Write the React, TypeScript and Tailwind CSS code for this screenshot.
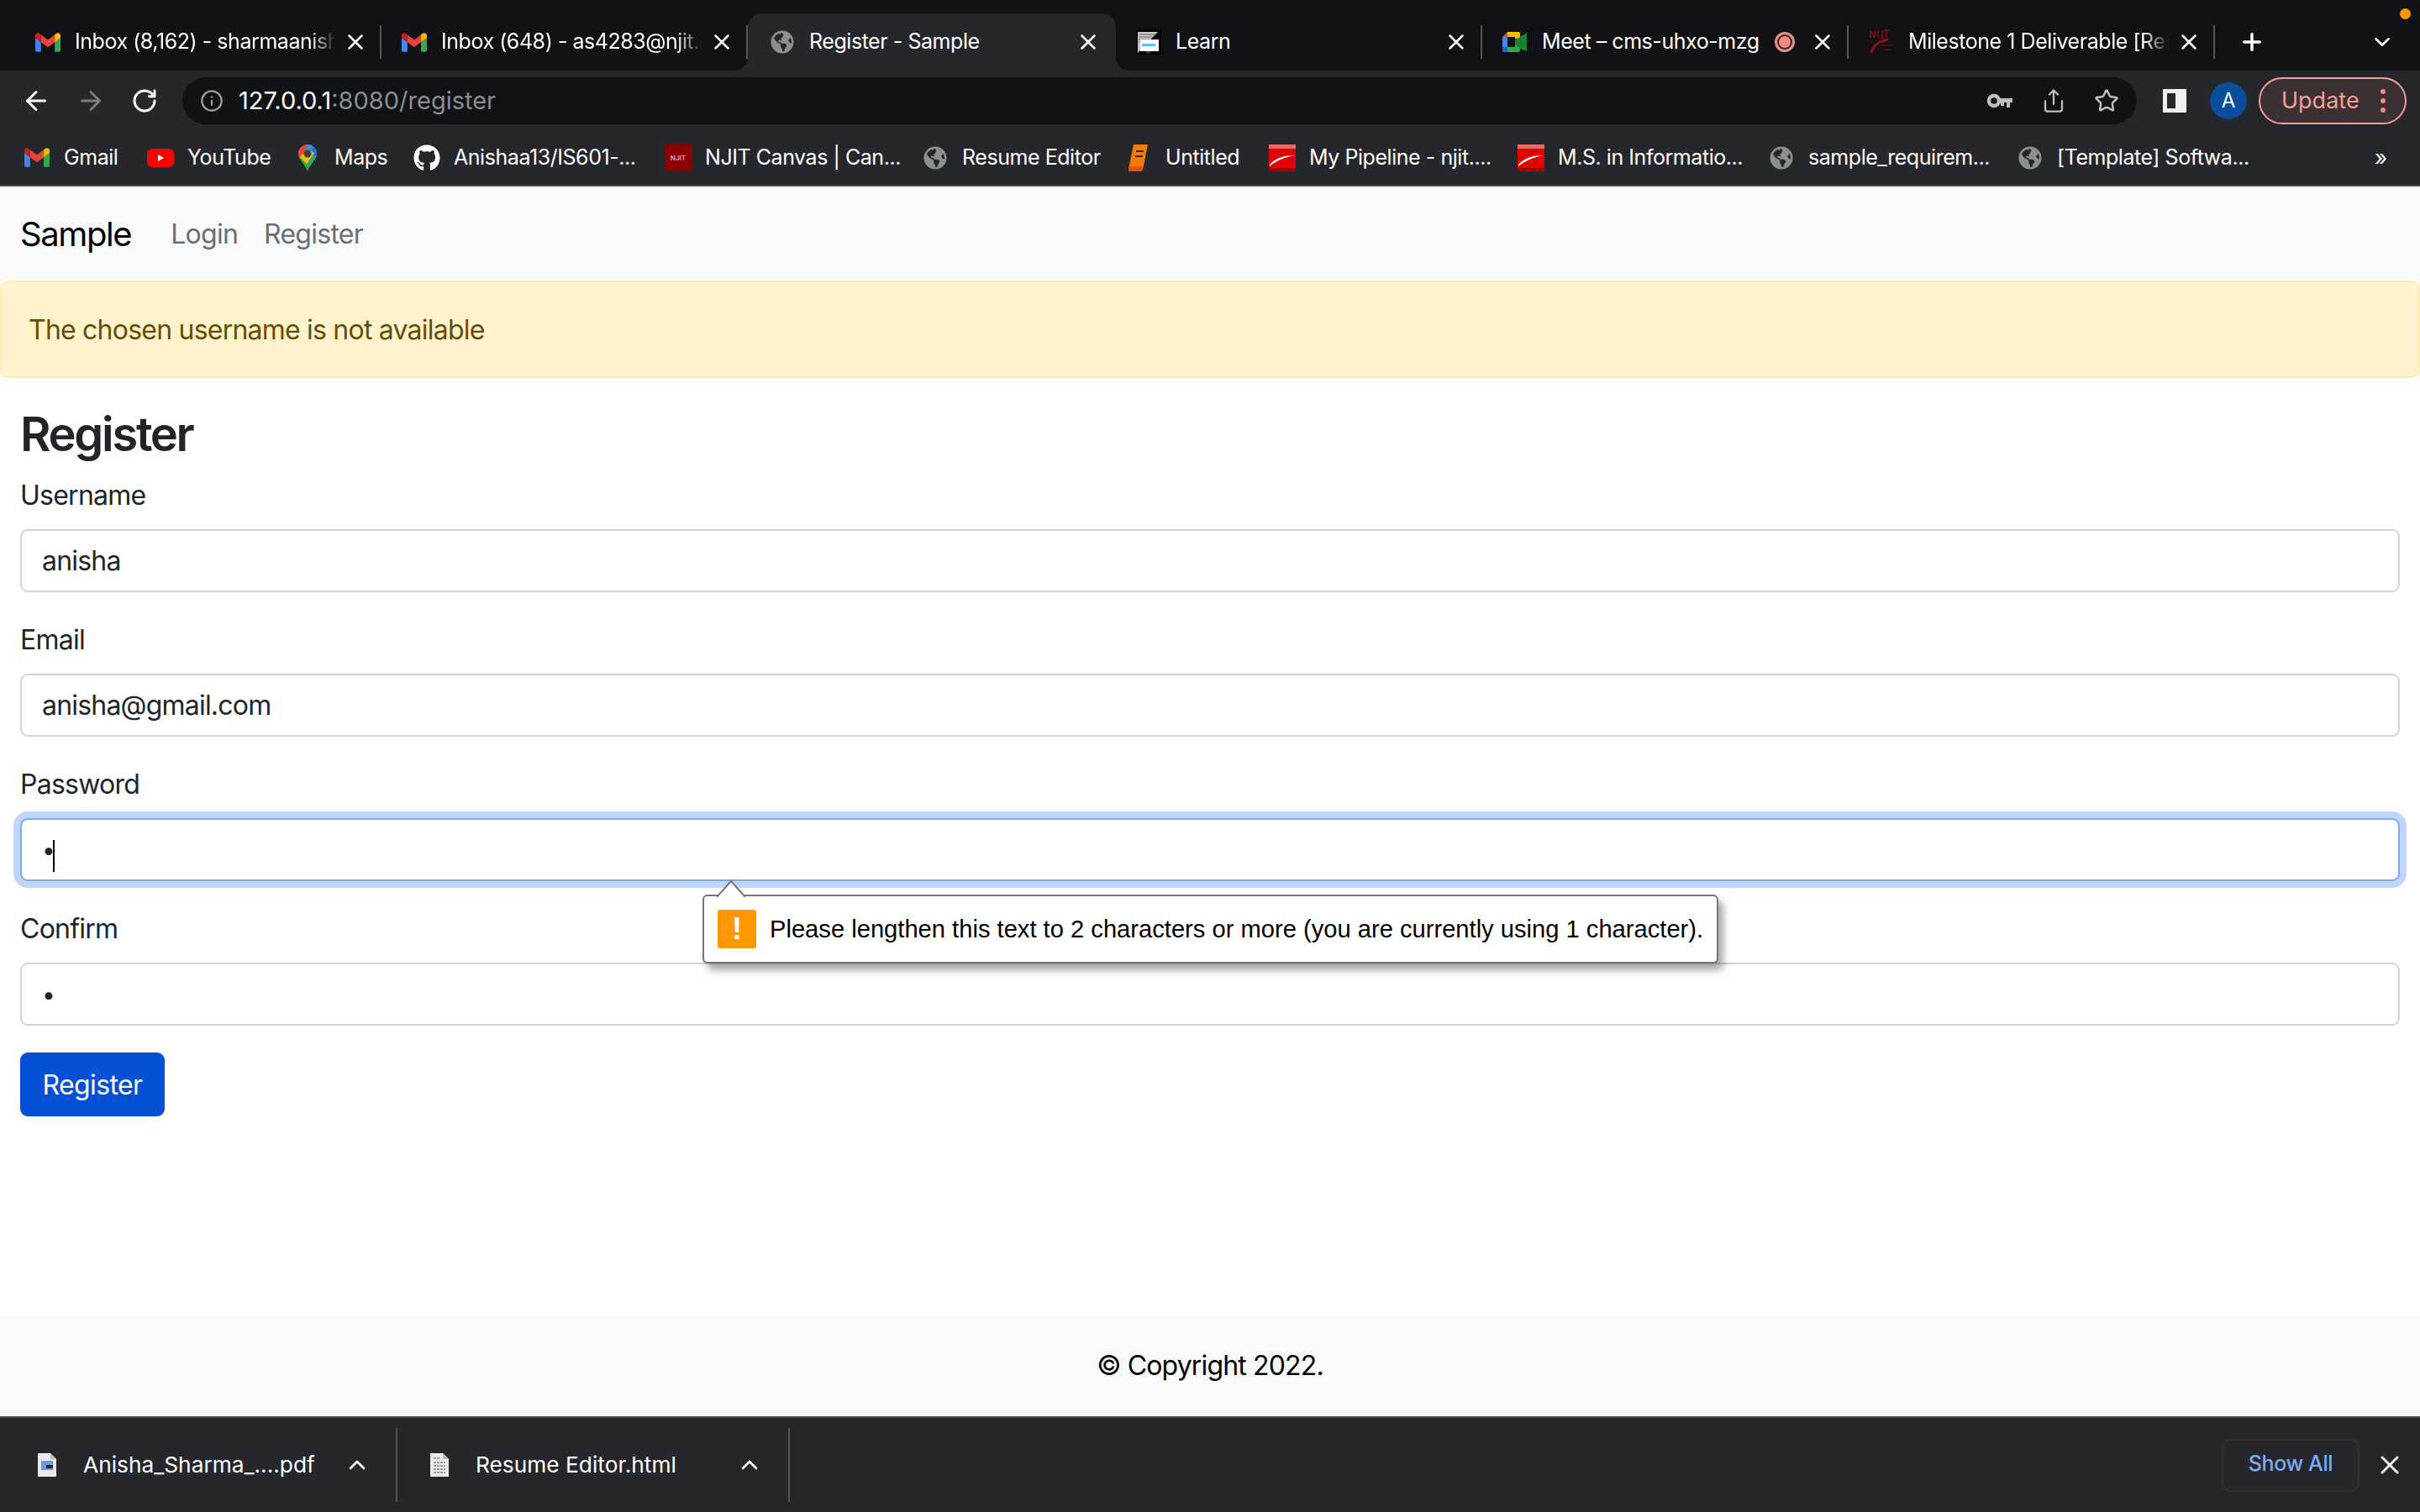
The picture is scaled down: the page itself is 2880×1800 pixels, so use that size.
import { ArrowLeft, ArrowRight, ChevronDown, ChevronUp, Info, Plus, RotateCw, Share, Star, X } from "lucide-react";
import type { ReactNode } from "react";
import { FaGithub, FaGlobeAmericas } from "react-icons/fa";

function GmailIcon({ className }: { className?: string }) {
  return (
    <svg viewBox="0 0 24 18" className={className}>
      <path fill="#4285f4" d="M1.6 18H5.4V8.7L0 4.6v11.8C0 17.3.7 18 1.6 18" />
      <path fill="#34a853" d="M18.5 18h3.9c.9 0 1.6-.7 1.6-1.6V4.6l-5.5 4.1" />
      <path fill="#fbbc04" d="M18.5 1.6v7.1L24 4.6V2.4c0-2-2.3-3.2-3.9-2" />
      <path fill="#ea4335" d="M5.4 8.7V1.6L12 6.5l6.5-4.9v7.1L12 13.6" />
      <path fill="#c5221f" d="M0 2.4v2.2l5.4 4.1V1.6L3.9.5C2.3-.7 0 .4 0 2.4" />
    </svg>
  );
}

function Globe() {
  return <FaGlobeAmericas className="h-[28px] w-[28px] text-[#8b8e92]" />;
}

function LearnIcon() {
  return (
    <svg viewBox="0 0 30 30" className="h-[30px] w-[30px]">
      <rect width="30" height="30" fill="#000" />
      <path fill="#c9c9c9" d="M2 3h24L2 28z" />
      <path stroke="#666" strokeWidth="1" d="M3 6h20M3 9h17M3 12h14M3 15h11" />
      <rect x="5" y="12" width="22" height="14" fill="#fff" />
      <rect x="7" y="17" width="16" height="3" fill="#5cc3f2" />
      <rect x="12" y="26" width="5" height="3" fill="#333" />
    </svg>
  );
}

function MeetIcon() {
  return (
    <svg viewBox="0 0 30 24" className="h-[24px] w-[30px]">
      <path fill="#ea4335" d="M6 0 0 6h6z" />
      <path fill="#fbbc04" d="M6 0h13a2 2 0 0 1 2 2v6h-6V6H6z" />
      <path fill="#4285f4" d="M0 6h6v12H0z" />
      <path fill="#1967d2" d="M0 18h6v6H2a2 2 0 0 1-2-2z" />
      <path fill="#34a853" d="M6 18h9v-3l6-4v11a2 2 0 0 1-2 2H6z" />
      <path fill="#188038" d="M15 9v6l6 5 8 3V1l-8 5z" />
    </svg>
  );
}

function NjitLogo() {
  return (
    <svg viewBox="0 0 30 32" className="h-[32px] w-[30px]">
      <path stroke="#7d1016" strokeWidth="1.6" fill="none" d="M2 2v9M7 2v9M2 2l5 9M11 2v9M16 2v9M14 11h4M21 2v9M18 2h7" />
      <path stroke="#8e1118" strokeWidth="3" fill="none" d="M3 29c2-9 10-14 20-16" />
      <path stroke="#5e1014" strokeWidth="1.5" d="M15 20h13M18 25h8" />
    </svg>
  );
}

function MapsIcon() {
  return (
    <svg viewBox="0 0 22 32" className="h-[32px] w-[22px]">
      <clipPath id="pin">
        <path d="M11 0C5 0 0 5 0 11c0 7 8 12 11 21 3-9 11-14 11-21C22 5 17 0 11 0z" />
      </clipPath>
      <g clipPath="url(#pin)">
        <rect width="22" height="32" fill="#34a853" />
        <path fill="#4285f4" d="M8 0h14v13l-6 2z" />
        <path fill="#1a73e8" d="M16 4h6v9h-6z" />
        <path fill="#ea4335" d="M0 0h11L3 16H0z" />
        <path fill="#fbbc04" d="M2 15 11 6l8 4-9 13z" />
      </g>
      <circle cx="11" cy="11" r="4.5" fill="#3c3f43" />
    </svg>
  );
}

function YoutubeIcon() {
  return (
    <svg viewBox="0 0 32 22" className="h-[22px] w-[32px]">
      <rect width="32" height="22" rx="6" fill="#f00" />
      <path fill="#fff" d="m13 7 7 4-7 4z" />
    </svg>
  );
}

function NjitSquare() {
  return (
    <div className="flex h-[32px] w-[32px] items-center justify-center bg-[#8b0000] text-[8px] font-bold text-[#d9a0a0]">
      NJIT
    </div>
  );
}

function BookIcon() {
  return (
    <svg viewBox="0 0 26 32" className="h-[32px] w-[26px]">
      <path fill="#f57c00" d="M7 0h17l-6 30H1z" />
      <path fill="#e65100" d="M1 26h17l-1 6H1z" />
      <path stroke="#3a2410" strokeWidth="2" d="M10 8h9M9 14h9" />
    </svg>
  );
}

function FlagIcon() {
  return (
    <svg viewBox="0 0 32 32" className="h-[32px] w-[32px]">
      <rect width="32" height="32" fill="#e30000" />
      <rect width="32" height="5" fill="#ec6a6a" />
      <rect y="28" width="32" height="4" fill="#a80000" />
      <path fill="#fff" d="M1 24C8 16 18 13 31 13c-11 2-20 5-30 13z" />
    </svg>
  );
}

function DocIcon({ pdf }: { pdf?: boolean }) {
  return (
    <svg viewBox="0 0 22 28" className="h-[28px] w-[22px]">
      <path fill="#e8eaed" d="M1 0h14l7 7v20a1 1 0 0 1-1 1H1a1 1 0 0 1-1-1V1a1 1 0 0 1 1-1z" />
      <path fill="#b8babd" d="M15 0v7h7z" />
      {pdf ? (
        <>
          <rect x="4" y="9" width="14" height="11" fill="#6a9be0" />
          <rect x="10" y="14" width="8" height="4" fill="#222" />
        </>
      ) : (
        <path stroke="#9a9c9f" strokeWidth="2" strokeDasharray="3 1" d="M4 6h8M4 11h14M4 15h14M4 19h14M4 23h14" />
      )}
    </svg>
  );
}

const tabs: { icon: ReactNode; title: string; fade?: boolean; extra?: ReactNode }[] = [
  { icon: <GmailIcon className="h-[23px] w-[30px]" />, title: "Inbox (8,162) - sharmaanisha", fade: true },
  { icon: <GmailIcon className="h-[23px] w-[30px]" />, title: "Inbox (648) - as4283@njit.edu", fade: true },
  { icon: <Globe />, title: "Register - Sample" },
  { icon: <LearnIcon />, title: "Learn" },
  {
    icon: <MeetIcon />,
    title: "Meet – cms-uhxo-mzg",
    extra: (
      <div className="mr-[10px] flex h-[24px] w-[24px] items-center justify-center rounded-full bg-[#f28b82]">
        <div className="h-[18px] w-[18px] rounded-full border-2 border-[#26272c] bg-[#f28b82]" />
      </div>
    ),
  },
  { icon: <NjitLogo />, title: "Milestone 1 Deliverable [Responsive", fade: true },
];

const bookmarks: { icon: ReactNode; label: string; boxClass: string }[] = [
  { icon: <GmailIcon className="h-[23px] w-[30px]" />, label: "Gmail", boxClass: "w-[147px]" },
  { icon: <YoutubeIcon />, label: "YouTube", boxClass: "w-[175px]" },
  { icon: <MapsIcon />, label: "Maps", boxClass: "w-[142px]" },
  { icon: <FaGithub className="h-[32px] w-[32px] text-white" />, label: "Anishaa13/IS601-...", boxClass: "w-[299px]" },
  { icon: <NjitSquare />, label: "NJIT Canvas | Can...", boxClass: "w-[306px]" },
  { icon: <Globe />, label: "Resume Editor", boxClass: "w-[242px]" },
  { icon: <BookIcon />, label: "Untitled", boxClass: "w-[171px]" },
  { icon: <FlagIcon />, label: "My Pipeline - njit....", boxClass: "w-[296px]" },
  { icon: <FlagIcon />, label: "M.S. in Informatio...", boxClass: "w-[298px]" },
  { icon: <Globe />, label: "sample_requirem...", boxClass: "w-[296px]" },
  { icon: <Globe />, label: "[Template] Softwa...", boxClass: "w-[320px]" },
];

function Tab({ icon, title, fade, extra, active }: (typeof tabs)[number] & { active?: boolean }) {
  return (
    <div
      className={
        active
          ? "flex h-[68px] w-[438px] shrink-0 items-center rounded-t-[16px] bg-[#26272c] pr-[18px] pl-[26px]"
          : "flex h-[68px] w-[436px] shrink-0 items-center pl-[24px]"
      }
    >
      <div className="flex w-[30px] shrink-0 justify-center">{icon}</div>
      <div
        className={
          fade
            ? "ml-[17px] flex-1 overflow-hidden text-[25px] tracking-[-0.45px] whitespace-nowrap text-white [mask-image:linear-gradient(to_right,black_90%,transparent)]"
            : "ml-[17px] flex-1 overflow-hidden text-[25px] tracking-[-0.45px] whitespace-nowrap text-white"
        }
      >
        {title}
      </div>
      {extra}
      <X size={30} strokeWidth={2} className="ml-[8px] shrink-0 text-white" />
      {!active && <div className="ml-[14px] h-[40px] w-[2px] shrink-0 bg-[#55565b]" />}
    </div>
  );
}

function Field({ label, value, type = "text", focused }: { label: string; value: string; type?: string; focused?: boolean }) {
  const size = type === "password" ? "text-[28px]" : "text-[32px] tracking-[-0.8px]";
  return (
    <div className="relative mb-[32px]">
      <label className="mb-[17px] block h-[48px] text-[32px] leading-[50px] tracking-[-0.75px] text-[#212529]">{label}</label>
      <input
        readOnly
        type={type}
        value={value}
        className={
          focused
            ? `block h-[75px] w-full rounded-[9px] border-2 border-[#7aaaf5] bg-white px-[24px] ${size} text-[#212529] shadow-[0_0_0_8px_#c0d5fd] outline-none`
            : `block h-[75px] w-full rounded-[9px] border-2 border-[#ced4da] bg-white px-[24px] ${size} text-[#212529] outline-none`
        }
      />
    </div>
  );
}

function Download({ pdf, name, width }: { pdf?: boolean; name: string; width: string }) {
  return (
    <div className={`flex h-[88px] items-center border-r-2 border-[#55565b] ${width}`}>
      <div className="flex w-[22px] shrink-0">
        <DocIcon pdf={pdf} />
      </div>
      <span className="ml-[32px] flex-1 text-[26.3px] whitespace-nowrap text-white">{name}</span>
      <ChevronUp size={32} strokeWidth={2} className="mr-[30px] text-white" />
    </div>
  );
}

export default function App() {
  return (
    <div className="relative flex h-[1800px] w-[2880px] flex-col overflow-hidden bg-white font-['Inter',sans-serif]">
      <div className="absolute top-[10px] right-[11px] h-[13px] w-[13px] rounded-full bg-[#ff9500]" />

      <div className="flex h-[84px] shrink-0 items-end bg-[#111216] pl-[18px]">
        <Tab {...tabs[0]} />
        <div className="bg-[#26272c]">
          <div className="rounded-br-[16px] bg-[#111216]">
            <Tab {...tabs[1]} />
          </div>
        </div>
        <Tab {...tabs[2]} active />
        <div className="bg-[#26272c]">
          <div className="rounded-bl-[16px] bg-[#111216]">
            <Tab {...tabs[3]} />
          </div>
        </div>
        <Tab {...tabs[4]} />
        <Tab {...tabs[5]} />
        <div className="flex h-[68px] flex-1 items-center pl-[28px]">
          <Plus size={32} strokeWidth={2.6} className="text-white" />
          <ChevronDown size={30} strokeWidth={2} className="ml-[124px] text-white" />
        </div>
      </div>

      <div className="flex h-[64px] shrink-0 bg-[#26272c] pt-[8px]">
        <div className="flex h-[56px] w-[217px] items-center pl-[25px]">
          <ArrowLeft size={36} strokeWidth={2} className="text-white" />
          <ArrowRight size={36} strokeWidth={2} className="ml-[29px] text-[#7c7d80]" />
          <RotateCw size={32} strokeWidth={2.2} className="ml-[30px] text-white" />
        </div>
        <div className="flex h-[56px] w-[2326px] items-center rounded-full bg-[#111216] pl-[21px]">
          <Info size={28} strokeWidth={2} className="text-[#9a9ca0]" />
          <div className="ml-[18px] flex-1 text-[29px]">
            <span className="text-white">127.0.0.1</span>
            <span className="text-[#8b8d91]">:8080/register</span>
          </div>
          <svg viewBox="0 0 30 18" className="h-[18px] w-[30px]">
            <circle cx="8" cy="9" r="6" fill="none" stroke="#bdbfc2" strokeWidth="4.5" />
            <path fill="#bdbfc2" d="M13 6h17v5h-3v6h-4v-6h-3v4h-4v-4h-3z" />
          </svg>
          <Share size={30} strokeWidth={1.8} className="ml-[34px] text-[#bdbfc2]" />
          <Star size={30} strokeWidth={2} className="mr-[21px] ml-[33px] text-[#bdbfc2]" />
        </div>
        <div className="flex h-[56px] flex-1 items-center pl-[31px]">
          <div className="h-[28px] w-[28px] border-[5px] border-r-[13px] border-[#eef0f2]" />
          <div className="ml-[28px] flex h-[44px] w-[44px] items-center justify-center rounded-full bg-[#0b4f9c] text-[24px] text-white">A</div>
          <div className="ml-[14px] flex h-[56px] w-[176px] items-center rounded-full border-2 border-[#f2a097] bg-[#3b3134] pl-[25px] text-[27px] text-[#f2a097]">
            Update
            <div className="ml-[25px] flex flex-col gap-[5px]">
              <div className="h-[6px] w-[6px] rounded-full bg-[#f28b82]" />
              <div className="h-[6px] w-[6px] rounded-full bg-[#f28b82]" />
              <div className="h-[6px] w-[6px] rounded-full bg-[#f28b82]" />
            </div>
          </div>
        </div>
      </div>

      <div className="flex h-[74px] shrink-0 items-center border-b-2 border-[#4a4b50] bg-[#26272c] pt-[7px] pl-[28px]">
        {bookmarks.map((b) => (
          <div key={b.label} className={`flex shrink-0 items-center ${b.boxClass}`}>
            <div className="flex w-[32px] shrink-0 justify-center">{b.icon}</div>
            <span className="ml-[16px] text-[25px] tracking-[-0.45px] whitespace-nowrap text-white">{b.label}</span>
          </div>
        ))}
        <span className="ml-[106px] text-[26px] text-white">»</span>
      </div>

      <div className="flex h-[112px] shrink-0 items-center bg-[#f8f9fa] pt-[2px] pl-[24px]">
        <span className="text-[40px] tracking-[-1.4px] text-black">Sample</span>
        <span className="ml-[47px] text-[32px] tracking-[-0.75px] text-[#6b6e72]">Login</span>
        <span className="ml-[31px] text-[32px] tracking-[-0.75px] text-[#6b6e72]">Register</span>
      </div>

      <div className="flex h-[116px] shrink-0 items-center rounded-[9px] border-2 border-[#ffecb5] bg-[#fff3cd] pt-[2px] pl-[32px] text-[32px] tracking-[-0.78px] text-[#664d03]">
        The chosen username is not available
      </div>

      <main className="flex-1 px-[24px] pt-[38px]">
        <h1 className="mb-[19px] h-[58px] text-[56px] leading-[58px] font-semibold tracking-[-2.3px] text-[#212529]">Register</h1>
        <Field label="Username" value="anisha" />
        <Field label="Email" value="anisha@gmail.com" />
        <div className="relative">
          <Field label="Password" value="x" type="password" focused />
          <div className="absolute top-[91px] left-[39px] h-[38px] w-[2px] bg-black" />
          <div className="absolute top-[156px] left-[812px] z-10 flex h-[82px] w-[1209px] items-center rounded-[6px] border-2 border-[#767676] bg-white pl-[16px] font-['Liberation_Sans',sans-serif] text-[29.15px] text-black shadow-[6px_8px_10px_rgba(0,0,0,0.35)]">
            <svg viewBox="0 0 36 20" className="absolute top-[-19px] left-[14px] h-[20px] w-[36px]">
              <path d="M1 20 18 1l17 19" fill="#fff" stroke="#767676" strokeWidth="2" />
            </svg>
            <div className="flex h-[46px] w-[46px] shrink-0 items-center justify-center rounded-[3px] bg-[#ff9800] text-[36px] font-bold text-white">!</div>
            <span className="ml-[16px] pt-[2px] whitespace-nowrap">Please lengthen this text to 2 characters or more (you are currently using 1 character).</span>
          </div>
        </div>
        <Field label="Confirm" value="x" type="password" />
        <button className="flex h-[76px] w-[172px] items-center justify-center rounded-[9px] bg-[#0550d4] pt-[1px] text-[32px] tracking-[-0.6px] text-white">Register</button>
      </main>

      <footer className="flex h-[120px] shrink-0 items-center justify-center bg-[#f8f9fa] text-[32px] tracking-[-0.85px] text-black">© Copyright 2022.</footer>

      <div className="flex h-[114px] shrink-0 items-center border-t-2 border-[#4a4b50] bg-[#26272c] pl-[45px]">
        <Download pdf name="Anisha_Sharma_....pdf" width="w-[428px]" />
        <div className="ml-[39px]">
          <Download name="Resume Editor.html" width="w-[428px]" />
        </div>
        <div className="ml-auto flex h-[63px] w-[164px] items-center justify-center rounded-[10px] border-2 border-[#2f3035] pb-[2px] text-[25px] font-medium tracking-[-0.4px] text-[#7cacf8]">Show All</div>
        <X size={36} strokeWidth={2} className="mr-[18px] ml-[18px] text-[#eef0f2]" />
      </div>
    </div>
  );
}
